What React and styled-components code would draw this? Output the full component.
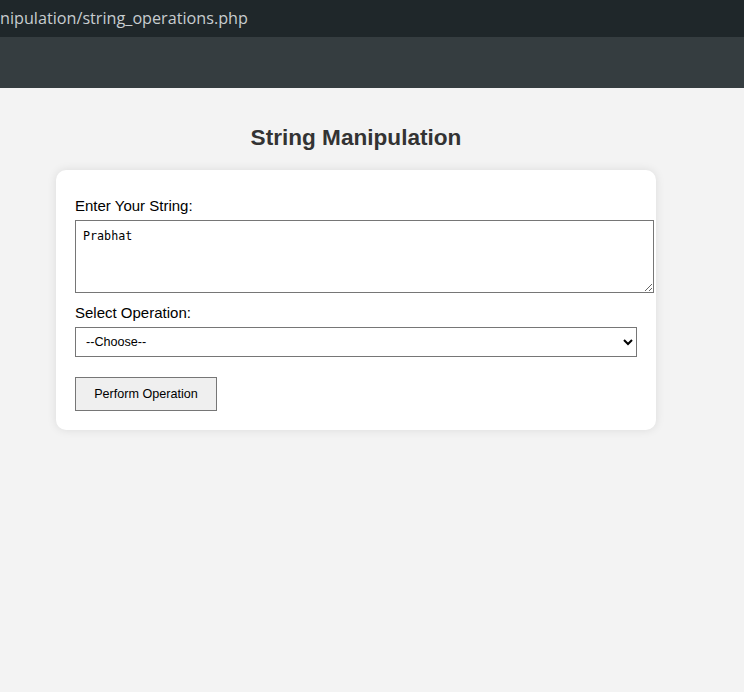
import React from 'react'
import styled, { createGlobalStyle } from 'styled-components'

const GlobalStyle = createGlobalStyle`
  body {
    margin: 0;
    background: #f3f3f3;
    font-family: 'Liberation Sans', Arial, sans-serif;
  }
`

const AddressBar = styled.div`
  height: 37px;
  background: #1f272a;
  color: #c8cdd0;
  font-family: 'Open Sans', 'Noto Sans', sans-serif;
  font-size: 16.2px;
  line-height: 37px;
  white-space: nowrap;
  overflow: hidden;
`

const Toolbar = styled.div`
  height: 51px;
  background: #353d40;
`

const Main = styled.main`
  padding: 16px 32px 40px 0;
`

const Title = styled.h2`
  margin: 20px 0 18px;
  text-align: center;
  font-size: 22.6px;
  line-height: 28px;
  font-weight: bold;
  color: #333;
`

const Card = styled.form`
  box-sizing: border-box;
  width: 600px;
  margin: 0 auto;
  padding: 20px 19px 19px;
  background: #fff;
  border-radius: 10px;
  box-shadow: 0 0 10px rgba(0, 0, 0, 0.1);
`

const Label = styled.label`
  display: block;
  margin: ${(p) => (p.first ? '7px' : '11px')} 0 5px;
  font-size: 15px;
  line-height: 18px;
  color: #000;
`

const TextArea = styled.textarea`
  display: block;
  width: 100%;
  height: 55px;
  padding: 8px 8px 8px 7px;
  border: 1px solid #767676;
  font-family: 'DejaVu Sans Mono', monospace;
  font-size: 11.7px;
  color: #000;
`

const Select = styled.select`
  display: block;
  width: 100%;
  height: 30px;
  padding: 0 6px;
  border: 1px solid #767676;
  border-radius: 0;
  background: #fff;
  font-family: 'Liberation Sans', Arial, sans-serif;
  font-size: 12.6px;
  color: #000;
`

const Button = styled.button`
  display: block;
  margin-top: 20px;
  width: 142px;
  height: 34px;
  padding: 0;
  border: 1px solid #767676;
  border-radius: 0;
  background: #efefef;
  font-family: 'Liberation Sans', Arial, sans-serif;
  font-size: 12.6px;
  color: #000;
`

export default function App() {
  return (
    <>
      <GlobalStyle />
      <AddressBar>nipulation/string_operations.php</AddressBar>
      <Toolbar />
      <Main>
        <Title>String Manipulation</Title>
        <Card onSubmit={(e) => e.preventDefault()}>
          <Label first htmlFor='str'>Enter Your String:</Label>
          <TextArea id='str' defaultValue='Prabhat' />
          <Label htmlFor='op'>Select Operation:</Label>
          <Select id='op' defaultValue=''>
            <option value=''>--Choose--</option>
            <option value='reverse'>Reverse</option>
            <option value='upper'>Uppercase</option>
            <option value='lower'>Lowercase</option>
            <option value='length'>Length</option>
          </Select>
          <Button type='submit'>Perform Operation</Button>
        </Card>
      </Main>
    </>
  )
}
